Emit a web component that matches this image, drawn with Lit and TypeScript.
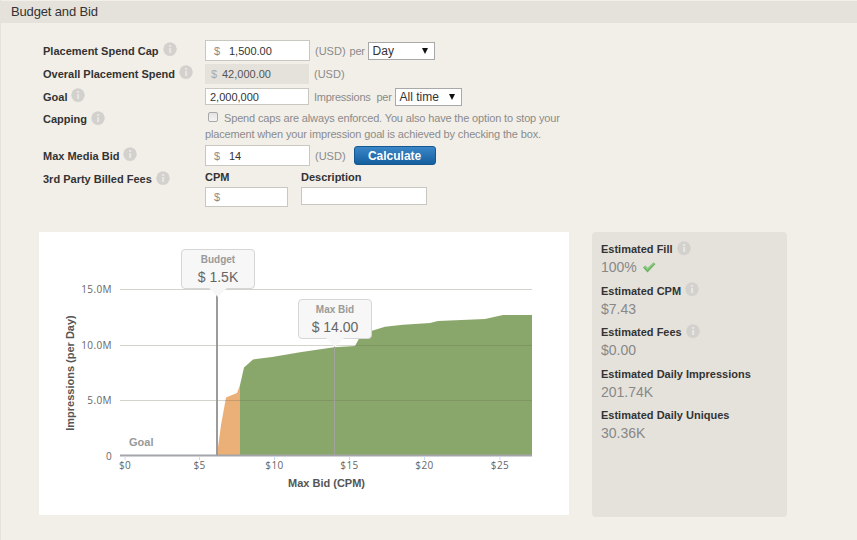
import { LitElement, html, svg, css } from 'lit';
import { customElement } from 'lit/decorators.js';

const info = html`<svg class="info" width="14" height="15" viewBox="0 0 14 15">
  <circle cx="7" cy="7.6" r="6.6" fill="#c8c6c1" opacity="0.5"></circle>
  <circle cx="7" cy="6.8" r="6.6" fill="#d2d1cd"></circle>
  <rect x="6" y="6" width="2.2" height="5" fill="#e6e5e2"></rect>
  <rect x="6" y="3" width="2.2" height="2" fill="#e6e5e2"></rect>
</svg>`;

const gridY = [289.5, 345.5, 400.5];
const xTicks = [
  { x: 125, t: '$0' },
  { x: 199.5, t: '$5' },
  { x: 274.5, t: '$10' },
  { x: 349.5, t: '$15' },
  { x: 424.5, t: '$20' },
  { x: 500, t: '$25' },
];

const orange = '217,455 221,425 226,397.5 237,393 240,385 240,455';
const green =
  '240,455 240,385 244,367.5 253,359.5 272,357 300,352.3 334,347.3 355,346 362,333 372,330.7 385,326.7 403,324.7 430,323 438,321 485,319 503,315 532,315 532,455';

// chart drawn in page coordinates, the card starts at 39,232
const chart = svg`
  <polygon points=${orange} fill="#ebb077"></polygon>
  <polygon points=${green} fill="#8aa76b"></polygon>
  ${gridY.map(
    (y) => svg`<line x1="120" x2="532" y1=${y} y2=${y} stroke="#6e6e50" stroke-opacity="0.3"></line>`
  )}
  <line x1="120" x2="532" y1="455.5" y2="455.5" stroke="#a3a5ab" stroke-width="2"></line>
  ${xTicks.map(
    (k) => svg`<line x1=${k.x} x2=${k.x} y1="456" y2="460" stroke="#ccd6eb"></line>
      <text class="tick" x=${k.x} y="469" text-anchor="middle">${k.t}</text>`
  )}
  <text class="tick" x="112" y="293" text-anchor="end">15.0M</text>
  <text class="tick" x="112" y="349" text-anchor="end">10.0M</text>
  <text class="tick" x="112" y="404" text-anchor="end">5.0M</text>
  <text class="tick" x="112" y="460" text-anchor="end">0</text>
  <text class="goal" x="129" y="446">Goal</text>
  <line x1="217" x2="217" y1="292" y2="455" stroke="#9b9b9b" stroke-width="2"></line>
  <line x1="334.5" x2="334.5" y1="342" y2="455" stroke="#a3a39c"></line>
  <text class="axis" x="326.5" y="487" text-anchor="middle">Max Bid (CPM)</text>
  <text class="axis" transform="translate(74 373) rotate(-90)" text-anchor="middle">Impressions (per Day)</text>
`;

@customElement('app-root')
export class AppRoot extends LitElement {
  static override styles = css`
    :host {
      display: block;
      height: 540px;
      overflow: hidden;
      background: #f2efe9;
      border-left: 1px solid #e5e2dc;
      box-sizing: border-box;
      font-family: 'Liberation Sans', Arial, sans-serif;
      font-size: 11px;
      color: #333;
    }

    .header {
      height: 22px;
      line-height: 21px;
      margin-top: 1px;
      background: #e5e2dc;
      padding-left: 10px;
      font-size: 13px;
      letter-spacing: -0.15px;
      color: #333;
    }

    .form {
      display: grid;
      grid-template-columns: 162px 1fr;
      padding: 16px 0 0 42px;
    }

    .label {
      display: flex;
      align-items: center;
      gap: 4px;
      font-weight: bold;
      font-size: 11px;
      color: #333;
      height: 100%;
    }

    .info {
      flex: none;
      position: relative;
      top: -1px;
    }

    .field {
      display: flex;
      align-items: center;
      font-size: 11px;
      color: #8b8b8b;
    }

    .r1 { height: 23px; }

    .label.capping { height: 22px; align-self: start; }
    .label.fee { height: 24px; align-self: start; }

    .input {
      box-sizing: border-box;
      display: flex;
      align-items: center;
      background: #fff;
      border: 1px solid #c9c7c1;
      color: #333;
      font-size: 11px;
      height: 21px;
      width: 105px;
      padding-left: 8px;
    }

    .input .cur { color: #8b8b8b; width: 15px; }
    .input.plain { width: 104px; height: 17px; padding-left: 4px; }
    .input.off {
      background: #e5e2dc;
      border-color: #e5e2dc;
      width: 104px;
      height: 20px;
      padding-left: 5px;
      color: #555;
    }
    .input.off .cur { width: 11px; color: #aaa; }

    .unit { margin-left: 5px; }
    .unit.long { letter-spacing: -0.25px; }
    .per { margin-left: 4px; letter-spacing: -0.3px; }
    .per.wide { margin-left: 6px; }

    .pick {
      box-sizing: border-box;
      position: relative;
      width: 67px;
      height: 18px;
      margin-left: 3px;
      background: #fff;
      border: 1px solid #a9a9a9;
      color: #333;
      font-size: 12px;
      line-height: 16px;
      padding-left: 4px;
    }

    .pick::after {
      content: '';
      position: absolute;
      right: 6px;
      top: 5px;
      border-left: 3.5px solid transparent;
      border-right: 3.5px solid transparent;
      border-top: 6px solid #111;
    }

    .check {
      display: inline-block;
      box-sizing: border-box;
      width: 10px;
      height: 10px;
      margin: 0 6px 0 3px;
      border: 1px solid #a8a8a8;
      border-radius: 2px;
      background: linear-gradient(#e3e3e3, #f4f4f4);
    }

    .note {
      box-sizing: border-box;
      height: 36px;
      width: 365px;
      padding-top: 2px;
      font-size: 11px;
      line-height: 16px;
      letter-spacing: -0.15px;
      color: #8b8b8b;
    }

    .calc {
      box-sizing: border-box;
      width: 82px;
      height: 19px;
      margin-left: 8px;
      border: 1px solid #14588f;
      border-radius: 3px;
      background: linear-gradient(#3a86c6, #155f9f);
      color: #fff;
      font: bold 12px 'Liberation Sans', Arial, sans-serif;
      padding: 0;
    }

    .fees {
      display: grid;
      grid-template-columns: 96px 126px;
    }

    .head { font-weight: bold; color: #333; height: 20px; line-height: 20px; }
    .fees .cpm { width: 83px; height: 20px; }
    .fees .desc { width: 126px; height: 18px; }

    .lower {
      display: flex;
      align-items: flex-start;
      margin: 25px 0 0 38px;
    }

    .card {
      position: relative;
      flex: none;
      width: 530px;
      height: 283px;
      background: #fff;
      overflow: hidden;
    }

    .card svg.plot {
      display: block;
      position: absolute;
      left: -39px;
      top: -232px;
    }

    .tick { font-size: 10px; letter-spacing: 0.4px; fill: #666; font-family: 'Open Sans', 'Liberation Sans', sans-serif; }
    .goal { font-size: 11px; font-weight: bold; fill: #999; }
    .axis { font-size: 11px; font-weight: bold; fill: #555; }

    .tip {
      position: absolute;
      box-sizing: border-box;
      width: 74px;
      height: 40px;
      background: #f7f7f7;
      border: 1px solid #d6d6d6;
      border-radius: 4px;
      text-align: center;
    }

    .tip::after {
      content: '';
      position: absolute;
      left: 50%;
      bottom: -9px;
      width: 18px;
      height: 9px;
      margin-left: -9px;
      background: #f7f7f7;
      clip-path: polygon(0 0, 100% 0, 50% 100%);
    }

    .tip b {
      display: block;
      margin-top: 4px;
      font-size: 10px;
      line-height: 12px;
      color: #9a9a9a;
    }

    .tip span {
      display: block;
      margin-top: 3px;
      font-size: 14px;
      line-height: 16px;
      color: #666;
    }

    .tip.budget { left: 142px; top: 17px; }
    .tip.bid { left: 259px; top: 67px; }

    .side {
      box-sizing: border-box;
      flex: none;
      width: 195px;
      height: 285px;
      margin-left: 23px;
      padding: 8px 9px;
      background: #e5e2dc;
      border-radius: 4px;
    }

    .stat { height: 41.5px; }
    .stat .label { height: 18px; }
    .stat .value {
      display: flex;
      align-items: center;
      gap: 5px;
      height: 18px;
      font-size: 14px;
      color: #888;
    }
  `;

  override render() {
    return html`
      <div class="header">Budget and Bid</div>

      <div class="form">
        <div class="label r1">Placement Spend Cap ${info}</div>
        <div class="field r1">
          <div class="input"><span class="cur">$</span>1,500.00</div>
          <span class="unit">(USD)</span><span class="per">per</span>
          <div class="pick">Day</div>
        </div>

        <div class="label r1">Overall Placement Spend ${info}</div>
        <div class="field r1">
          <div class="input off"><span class="cur">$</span>42,000.00</div>
          <span class="unit">(USD)</span>
        </div>

        <div class="label r1">Goal ${info}</div>
        <div class="field r1">
          <div class="input plain">2,000,000</div>
          <span class="unit long">Impressions</span><span class="per wide">per</span>
          <div class="pick">All time</div>
        </div>

        <div class="label capping">Capping ${info}</div>
        <div class="note">
          <span class="check"></span>Spend caps are always enforced. You also have the option to stop your
          placement when your impression goal is achieved by checking the box.
        </div>

        <div class="label r1">Max Media Bid ${info}</div>
        <div class="field r1">
          <div class="input"><span class="cur">$</span>14</div>
          <span class="unit">(USD)</span>
          <button class="calc">Calculate</button>
        </div>

        <div class="label fee">3rd Party Billed Fees ${info}</div>
        <div class="fees">
          <div class="head">CPM</div>
          <div class="head">Description</div>
          <div class="input cpm"><span class="cur">$</span></div>
          <div class="input desc"></div>
        </div>
      </div>

      <div class="lower">
        <div class="card">
          <svg class="plot" width="857" height="540" viewBox="0 0 857 540">${chart}</svg>
          <div class="tip budget"><b>Budget</b><span>$ 1.5K</span></div>
          <div class="tip bid"><b>Max Bid</b><span>$ 14.00</span></div>
        </div>

        <div class="side">
          <div class="stat">
            <div class="label">Estimated Fill ${info}</div>
            <div class="value">
              100%
              <svg width="14" height="11" viewBox="0 0 14 11">
                <path d="M1 5.5 L3.5 3.5 L5.5 6 L11.5 0.5 L13.5 2 L5.5 10.5 Z" fill="#6db462"></path>
                <path d="M5.5 6 L11.5 0.5 L12.5 1.2 L5.5 8 L2.5 5 L3.5 3.5 Z" fill="#93cc88"></path>
              </svg>
            </div>
          </div>
          <div class="stat">
            <div class="label">Estimated CPM ${info}</div>
            <div class="value">$7.43</div>
          </div>
          <div class="stat">
            <div class="label">Estimated Fees ${info}</div>
            <div class="value">$0.00</div>
          </div>
          <div class="stat">
            <div class="label">Estimated Daily Impressions</div>
            <div class="value">201.74K</div>
          </div>
          <div class="stat">
            <div class="label">Estimated Daily Uniques</div>
            <div class="value">30.36K</div>
          </div>
        </div>
      </div>
    `;
  }
}
